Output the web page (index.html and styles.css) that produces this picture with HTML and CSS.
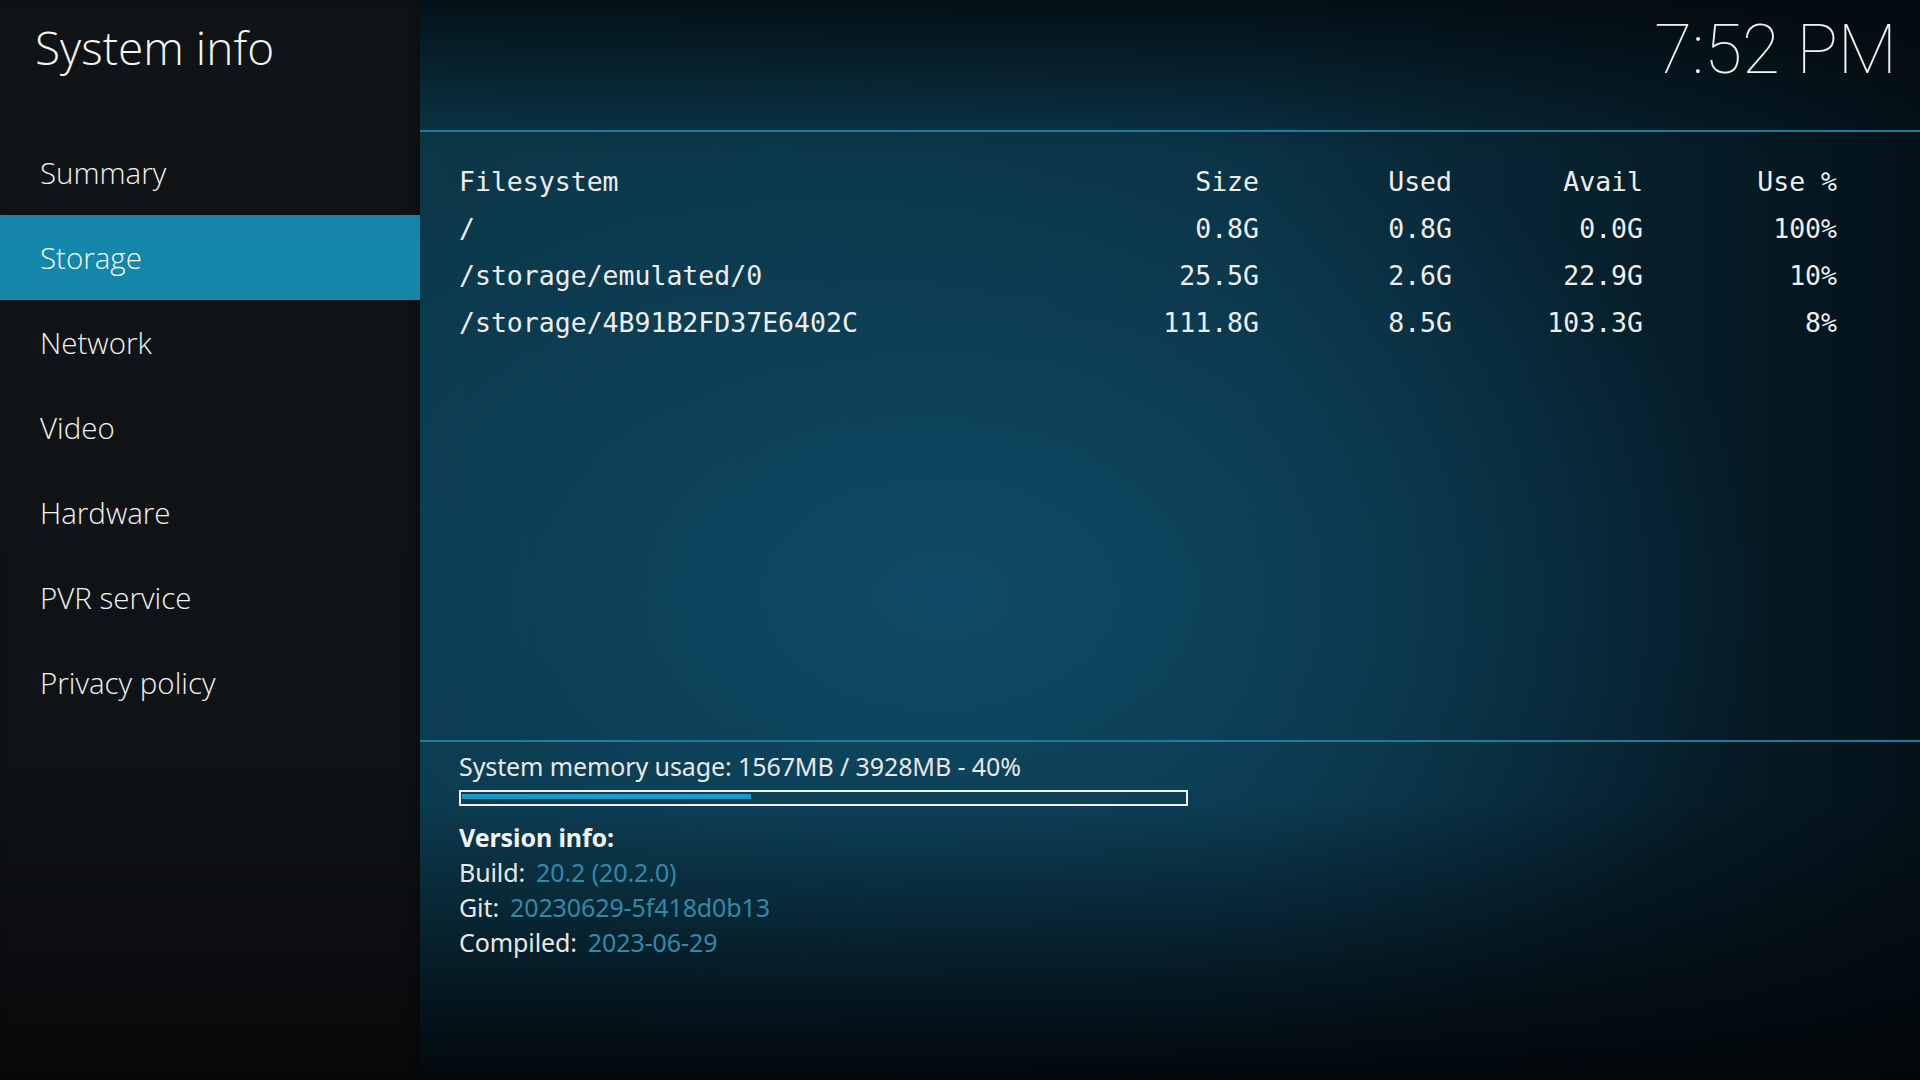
FILE: index.html
```html
<!DOCTYPE html>
<html lang="en">
<head>
    <meta charset="UTF-8">
    <meta name="viewport" content="width=device-width, initial-scale=1.0">
    <title>System info</title>
    <link rel="stylesheet" href="styles.css">
</head>
<body>
    <div class="screen">
        <aside class="sidebar">
            <h1 class="title">System info</h1>
            <ul class="menu">
                <li>Summary</li>
                <li class="active">Storage</li>
                <li>Network</li>
                <li>Video</li>
                <li>Hardware</li>
                <li>PVR service</li>
                <li>Privacy policy</li>
            </ul>
        </aside>

        <main class="content">
            <header class="topbar">
                <span class="clock">7:52 PM</span>
            </header>

            <!-- df style output -->
            <section class="storage">
                <div class="disk-table">
                    <span>Filesystem</span><span class="num">Size</span><span class="num">Used</span><span class="num">Avail</span><span class="num">Use %</span>
                    <span>/</span><span class="num">0.8G</span><span class="num">0.8G</span><span class="num">0.0G</span><span class="num">100%</span>
                    <span>/storage/emulated/0</span><span class="num">25.5G</span><span class="num">2.6G</span><span class="num">22.9G</span><span class="num">10%</span>
                    <span>/storage/4B91B2FD37E6402C</span><span class="num">111.8G</span><span class="num">8.5G</span><span class="num">103.3G</span><span class="num">8%</span>
                </div>
            </section>

            <section class="info">
                <p class="line">System memory usage: 1567MB / 3928MB - 40%</p>
                <div class="progress">
                    <div class="progress-fill" style="width: 40%"></div>
                </div>
                <p class="line heading">Version info:</p>
                <p class="line">Build:<span class="value">20.2 (20.2.0)</span></p>
                <p class="line">Git:<span class="value">20230629-5f418d0b13</span></p>
                <p class="line">Compiled:<span class="value">2023-06-29</span></p>
            </section>
        </main>
    </div>
</body>
</html>
```

FILE: styles.css
```css
body {
    margin: 0;
    background-color: #05121a;
    font-family: "Noto Sans", "Open Sans", sans-serif;
    color: #f2f2f2;
}

.screen {
    display: flex;
    width: 1920px;
    height: 1080px;
    overflow: hidden;
}

/* left column */
.sidebar {
    width: 420px;
    flex-shrink: 0;
    background: linear-gradient(180deg, #111417 0%, #101316 70%, #08090b 100%);
    box-shadow: inset -6px 0 10px rgba(0, 0, 0, 0.25);
}

.title {
    height: 130px;
    margin: 0;
    padding: 24px 0 0 35px;
    box-sizing: border-box;
    font-family: "Open Sans", "Noto Sans", sans-serif;
    font-size: 46px;
    line-height: 46px;
    font-weight: 300;
    color: #f4f4f4;
}

.menu {
    list-style: none;
    margin: 0;
    padding: 0;
}

.menu li {
    height: 85px;
    display: flex;
    align-items: center;
    padding-left: 40px;
    font-family: "Open Sans", "Noto Sans", sans-serif;
    font-size: 29.5px;
    font-weight: 300;
    color: #f2f2f2;
}

.menu li.active {
    background-color: #1386aa;
    color: #f6f6f6;
}

/* right column */
.content {
    flex: 1;
    display: flex;
    flex-direction: column;
    background:
        linear-gradient(180deg, rgba(2, 8, 12, 0.8) 0, rgba(2, 8, 12, 0) 150px),
        linear-gradient(0deg, rgba(2, 6, 9, 0.95) 0, rgba(2, 6, 9, 0) 280px),
        radial-gradient(ellipse 55% 50% at 35% 55%, #0f4a66 0%, rgba(15, 74, 102, 0) 100%),
        linear-gradient(90deg, #0b3748 0%, #0a3042 55%, #04121a 100%);
}

.topbar {
    height: 130px;
    flex-shrink: 0;
    display: flex;
    justify-content: flex-end;
    align-items: flex-start;
    padding-right: 23px;
    border-bottom: 2px solid #1d7c9e;
}

.clock {
    margin-top: 15px;
    font-family: Roboto, "Noto Sans", sans-serif;
    font-weight: 100;
    font-size: 69px;
    line-height: 70px;
    color: #f4f4f4;
}

.storage {
    flex: 1;
    padding: 26px 83px 0 39px;
}

.disk-table {
    display: grid;
    grid-template-columns: 1fr 150px 193px 191px 194px;
    font-family: "DejaVu Sans Mono", "Liberation Mono", monospace;
    font-size: 26.5px;
    line-height: 47px;
    color: #eeeeee;
}

.disk-table .num {
    text-align: right;
}

.info {
    height: 340px;
    flex-shrink: 0;
    box-sizing: border-box;
    padding: 7px 0 0 39px;
    border-top: 2px solid #1d7c9e;
}

.line {
    margin: 0;
    font-size: 25px;
    line-height: 35px;
    letter-spacing: -0.1px;
    color: #e8e8e8;
}

.heading {
    margin-top: 14px;
    font-weight: 700;
    color: #f4f4f4;
}

.value {
    margin-left: 11px;
    color: #3488aa;
}

.progress {
    width: 729px;
    height: 16px;
    margin-top: 6px;
    box-sizing: border-box;
    border: 2px solid #f2f2f2;
    padding: 2px 1px;
}

.progress-fill {
    height: 5px;
    background-color: #1e96c8;
}
```
